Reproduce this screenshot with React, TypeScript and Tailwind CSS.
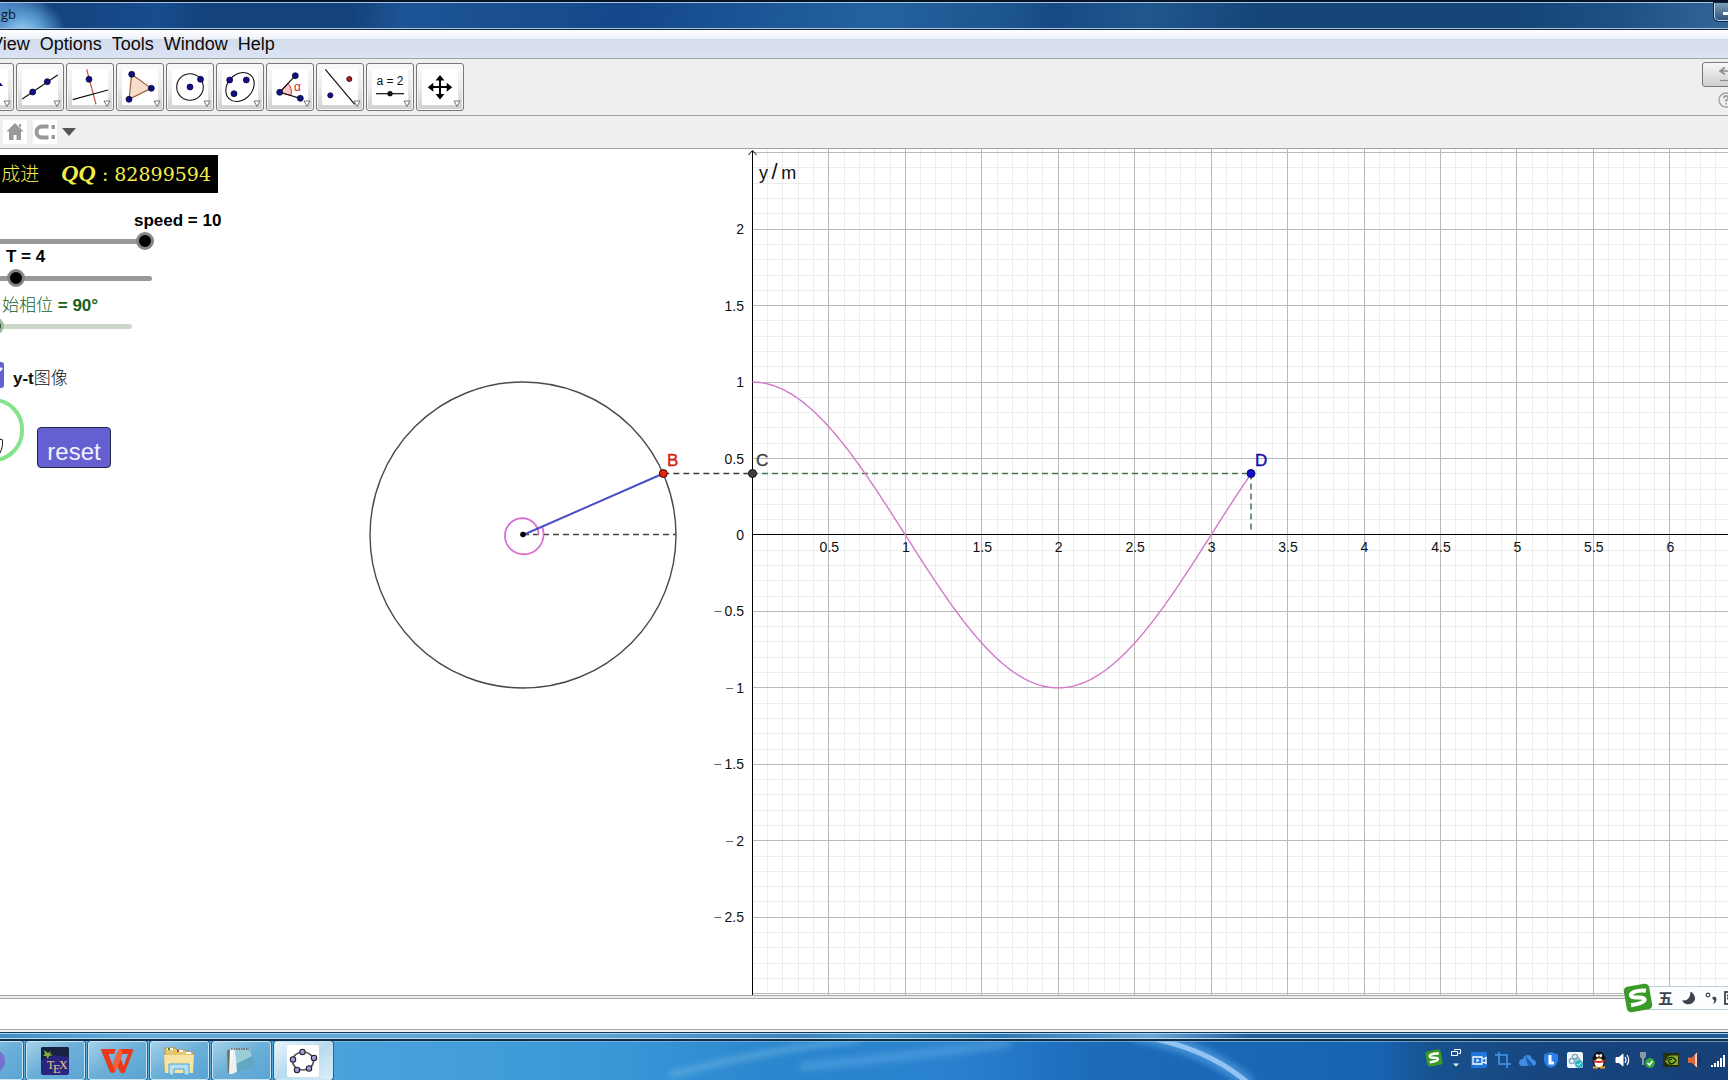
import React from "react";

const NAVY = "#101080";

/* ---------- toolbar ---------- */

function Dot({ x, y, c = NAVY, r = 3 }: { x: number; y: number; c?: string; r?: number }) {
  return <circle cx={x} cy={y} r={r} fill={c} stroke="#000033" strokeWidth="0.7" />;
}

function Tool({ label, children }: { label: string; children: React.ReactNode }) {
  return (
    <button
      aria-label={label}
      className="h-12 w-12 shrink-0 rounded-[3px] border border-[#777] bg-gradient-to-b from-[#fafafa] via-[#ececec] to-[#cfcfcf] shadow-[inset_0_0_0_1px_#f8f8f8]"
    >
      <svg viewBox="1 1 46 46" className="block h-full w-full" fill="none">
        <rect x="6" y="6" width="36" height="36" fill="#fff" />
        {children}
        <path d="M38 38h6l-3 5.5z" fill="#fff" stroke="#666" strokeWidth="0.9" />
      </svg>
    </button>
  );
}

function Toolbar() {
  return (
    <div className="flex justify-between overflow-hidden border-b border-[#a3a3a3] bg-[#efefef]">
      <div className="-ml-[34px] flex gap-0.5 pt-1 pb-1">
        <Tool label="Move">
          <path d="M28 12l9 11h-6z" fill={NAVY} />
        </Tool>
        <Tool label="Line">
          <path d="M6.3 36L41.7 12" stroke="#111" strokeWidth="1.2" />
          <Dot x={16.7} y={29} />
          <Dot x={31.3} y={18.7} />
        </Tool>
        <Tool label="Perpendicular line">
          <path d="M20.7 6.3L30 41.3" stroke="#c44a3c" strokeWidth="1.2" />
          <path d="M6.7 36.7L42 27" stroke="#111" strokeWidth="1.2" />
          <Dot x={23} y={16.3} />
        </Tool>
        <Tool label="Polygon">
          <path d="M15.7 11.3L35.3 25.3 13 36.3z" fill="#f5dccb" stroke="#9a5a30" strokeWidth="1.1" />
          <Dot x={15.7} y={11.3} />
          <Dot x={35.3} y={25.3} />
          <Dot x={13} y={36.3} />
        </Tool>
        <Tool label="Circle">
          <circle cx="24" cy="24" r="13.3" stroke="#111" strokeWidth="1.1" />
          <Dot x={24} y={24} />
          <Dot x={34.5} y={16.3} />
        </Tool>
        <Tool label="Ellipse">
          <ellipse cx="24" cy="24" rx="16" ry="12.5" transform="rotate(-48 24 24)" stroke="#111" strokeWidth="1.1" />
          <Dot x={13.7} y={17} />
          <Dot x={30.3} y={17} />
          <Dot x={18} y={30.7} />
        </Tool>
        <Tool label="Angle">
          <path d="M13.7 29.3L22 20.4Q26.5 25 25 32.5z" fill="#f8c9c4" stroke="#c33" strokeWidth="1" />
          <path d="M29.3 12.7L13.7 29.3 34.3 35.3" stroke="#111" strokeWidth="1.2" />
          <text x="28" y="28" fontSize="12" fill="#d22" className="font-['Liberation_Sans',sans-serif]">α</text>
          <Dot x={29.3} y={12.7} />
          <Dot x={13.7} y={29.3} />
          <Dot x={34.3} y={35.3} />
        </Tool>
        <Tool label="Reflect about line">
          <path d="M9.3 6.3L38.7 41.3" stroke="#111" strokeWidth="1.2" />
          <Dot x={14.3} y={32.3} r={2.6} />
          <Dot x={33.3} y={16} r={2.6} c="#b02020" />
        </Tool>
        <Tool label="Slider">
          <text x="24" y="22" fontSize="12" fill="#111" textAnchor="middle" className="font-['Liberation_Sans',sans-serif]">a = 2</text>
          <path d="M10 30.7h28" stroke="#111" strokeWidth="1.2" />
          <circle cx="24" cy="30.7" r="2.6" fill="#111" />
        </Tool>
        <Tool label="Move graphics view">
          <path d="M24 14v20M14 24h20" stroke="#000" strokeWidth="2" />
          <path d="M24 12l4.5 5.5h-9zM24 36.5l4.5-5.5h-9zM11.8 24.2l5.5-4.5v9zM36.2 24.2l-5.5-4.5v9z" fill="#000" />
        </Tool>
      </div>
      <div className="-mr-[22px] flex flex-col items-center gap-1 pt-[3px]">
        <button
          aria-label="Undo"
          className="h-[25px] w-12 rounded-[3px] border border-[#777] bg-gradient-to-b from-[#f8f8f8] to-[#cfcfcf]"
        >
          <svg viewBox="0 0 46 23" className="h-full w-full" fill="none" stroke="#8f8f8f" strokeWidth="1.6">
            <path d="M17 8h16M22 4.5L17 8l5 3.5" />
            <path d="M17 17.5h16" strokeWidth="1.2" />
          </svg>
        </button>
        <button aria-label="Help" className="h-[18px] w-[18px]">
          <svg viewBox="0 0 18 18" className="h-full w-full" fill="none" stroke="#a0a0a0">
            <circle cx="9" cy="9" r="7" strokeWidth="1.4" />
            <path d="M6.8 7.2q.2-2.2 2.3-2.2 2.2 0 2.2 2 0 1.4-2.2 2.4v1.3M9.1 12v1.6" strokeWidth="1.8" />
          </svg>
        </button>
      </div>
    </div>
  );
}

function StyleBar() {
  return (
    <div className="flex h-[33px] items-center gap-[5px] border-b border-[#a3a3a3] bg-[#efefef] pl-[3px]">
      <button aria-label="Standard view" className="h-6 w-6 bg-white">
        <svg viewBox="0 0 24 24" fill="#999" className="h-full w-full">
          <path d="M12 3l8.5 8.5h-2.500V20h-4.500v-5h-3v5H6v-8.500H3.500zM16 4h2v4l-2-2z" />
        </svg>
      </button>
      <button aria-label="Point capturing" className="ml-px h-6 w-6 bg-white">
        <svg viewBox="0 0 24 24" fill="none" className="h-full w-full">
          <path d="M15.500 6.500H9a5.500 5.500 0 000 11h6.500" stroke="#999" strokeWidth="4" />
          <path d="M18.500 5h3.500v4h-3.500zM18.500 15h3.500v4h-3.500z" fill="#999" />
        </svg>
      </button>
      <button aria-label="More" className="h-6 w-[14px]">
        <svg viewBox="0 0 14 24" className="h-full w-full">
          <path d="M0 8h14L7 16z" fill="#555" />
        </svg>
      </button>
    </div>
  );
}

/* ---------- graphics view ---------- */

const UNIT = 152.9;
const X0 = 752.4;
const Y0 = 385.95;
const CX = 523;
const CY = 386;
const px = (v: number) => X0 + UNIT * v;
const py = (v: number) => Y0 - UNIT * v;
const snap = (v: number) => Math.floor(v) + 0.5;

const T_NOW = 3.261;
const Y_NOW = Math.cos((Math.PI / 2) * T_NOW);
const PHASE = (Math.PI / 2) * (1 + T_NOW);

const curve = Array.from({ length: 201 }, (_, i) => {
  const t = (T_NOW * i) / 200;
  return `${px(t).toFixed(2)},${py(Math.cos((Math.PI / 2) * t)).toFixed(2)}`;
}).join(" ");

const spiral = Array.from({ length: 121 }, (_, i) => {
  const a = (PHASE * i) / 120;
  const r = 15.5 + (5 * a) / (2 * Math.PI);
  return `${(CX + r * Math.cos(a)).toFixed(2)},${(CY - r * Math.sin(a)).toFixed(2)}`;
}).join(" ");

function Plot() {
  const cols = Array.from({ length: 130 }, (_, i) => i + 1);
  const rows = Array.from({ length: 57 }, (_, i) => i - 31);
  const xTicks = Array.from({ length: 12 }, (_, i) => (i + 1) / 2);
  const yTicks = [2, 1.5, 1, 0.5, 0, -0.5, -1, -1.5, -2, -2.5];
  const bx = CX + 153 * Math.cos(PHASE);
  const by = snap(py(Y_NOW) - 0.5);
  const dx = px(T_NOW);
  return (
    <svg className="absolute inset-0 h-full w-full font-['Liberation_Sans',sans-serif]" fill="none">
      {cols.filter((i) => i % 5).map((i) => (
        <path key={i} d={`M${snap(px(i / 10))} 0V844`} stroke="#ececec" />
      ))}
      {rows.filter((i) => i % 5 && i > -30).map((i) => (
        <path key={i} d={`M${X0} ${snap(py(i / 10))}H9999`} stroke="#ececec" />
      ))}
      {cols.filter((i) => i % 5 === 0).map((i) => (
        <path key={i} d={`M${snap(px(i / 10))} 0V846`} stroke="#b9b9b9" />
      ))}
      {rows.filter((i) => i % 5 === 0).map((i) => (
        <path key={i} d={`M${X0} ${snap(py(i / 10))}H9999`} stroke="#b9b9b9" />
      ))}
      <path d={`M752.5 2V9999M${X0} ${snap(Y0)}H9999`} stroke="#000" />
      <path d="M748.5 6l4-4.5 4 4.5" stroke="#000" />

      <g fontSize="14" fill="#111">
        {xTicks.map((v) => (
          <text key={v} x={px(v) + 0.5} y="403" textAnchor="middle">{v}</text>
        ))}
        {yTicks.map((v) => (
          <text key={v} x="744" y={Math.round(py(v)) + 5} textAnchor="end">
            {v < 0 ? <><tspan fill="#666">−</tspan>{`\u2009${-v}`}</> : v}
          </text>
        ))}
      </g>
      <text x="759" y="30" fontSize="18" fill="#111">
        {"y\u2009"}<tspan fontSize="22">/</tspan>{"\u2009m"}
      </text>

      <circle cx={CX} cy={CY} r="153" stroke="#4a4a4a" strokeWidth="1.4" />
      <path d={`M${CX} ${snap(CY - 1)}H${CX + 153}`} stroke="#444" strokeWidth="1.3" strokeDasharray="6 4" />
      <polyline points={spiral} stroke="#d86fd0" strokeWidth="1.8" />
      <path d={`M${CX} ${CY}L${bx} ${by}`} stroke="#4a4fc8" strokeWidth="2" />
      <path d={`M${bx} ${by}H752`} stroke="#3c3c3c" strokeWidth="1.5" strokeDasharray="6 4" />
      <path d={`M752 ${by}H${dx}`} stroke="#47744f" strokeWidth="1.5" strokeDasharray="6 4" />
      <path d={`M${dx} ${by}V383`} stroke="#47744f" strokeWidth="1.5" strokeDasharray="6 4" />
      <polyline points={curve} stroke="#d279cc" strokeWidth="1.4" />

      <circle cx={CX} cy={CY - 0.5} r="2.8" fill="#000" />
      <circle cx={bx} cy={by} r="4" fill="#e8200c" stroke="#3a0a05" />
      <circle cx="752.5" cy={by} r="4" fill="#404040" stroke="#111" />
      <circle cx={dx} cy={by} r="4" fill="#1010d0" stroke="#0a0a60" />
      <g fontSize="17">
        <text x="667" y="317" fill="#d8200f" stroke="#d8200f" strokeWidth="0.4">B</text>
        <text x="756" y="317" fill="#444" stroke="#444" strokeWidth="0.4">C</text>
        <text x="1255" y="317" fill="#1212a8" stroke="#1212a8" strokeWidth="0.4">D</text>
      </g>
    </svg>
  );
}

const CJK = "font-['Noto_Sans_CJK_SC',sans-serif] font-light";

function Controls() {
  return (
    <div className="relative flex flex-col items-start font-['Liberation_Sans',sans-serif] text-[17px] leading-5">
      <div className="mt-1.5 flex h-[38px] w-[218px] items-center justify-end gap-[22px] overflow-hidden bg-black pr-[7px] whitespace-nowrap text-[#f3ee4c]">
        <span className={`${CJK} pb-0.5 text-[19px]`}>成进</span>
        <p className="flex items-baseline gap-1.5 pb-0.5 font-['DejaVu_Serif',serif] text-[19px]">
          <i className="font-['Liberation_Serif',serif] text-2xl leading-5 font-bold">QQ</i>
          <span>:</span>
          <span>82899594</span>
        </p>
      </div>

      <label htmlFor="speed" className="mt-[18px] pl-[134px] font-bold">speed = 10</label>
      <input
        id="speed"
        type="range"
        min="0"
        max="10"
        defaultValue="10"
        className="mt-px -ml-[66px] block h-[18px] w-[220px] appearance-none rounded-full bg-[linear-gradient(#999,#999)] bg-[length:212px_5px] bg-[position:left_center] bg-no-repeat [&::-webkit-slider-thumb]:h-[18px] [&::-webkit-slider-thumb]:w-[18px] [&::-webkit-slider-thumb]:appearance-none [&::-webkit-slider-thumb]:rounded-full [&::-webkit-slider-thumb]:border-[3px] [&::-webkit-slider-thumb]:border-[#858585] [&::-webkit-slider-thumb]:bg-black"
      />
      <label htmlFor="period" className="-mt-[3px] pl-[6px] font-bold">T = 4</label>
      <input
        id="period"
        type="range"
        min="0"
        max="10"
        defaultValue="4"
        className="mt-0.5 -ml-[78px] block h-[18px] w-[230px] appearance-none bg-transparent [&::-webkit-slider-runnable-track]:h-[5px] [&::-webkit-slider-runnable-track]:rounded-full [&::-webkit-slider-runnable-track]:bg-[#999] [&::-webkit-slider-thumb]:-mt-[7px] [&::-webkit-slider-thumb]:h-[18px] [&::-webkit-slider-thumb]:w-[18px] [&::-webkit-slider-thumb]:appearance-none [&::-webkit-slider-thumb]:rounded-full [&::-webkit-slider-thumb]:border-[3px] [&::-webkit-slider-thumb]:border-[#858585] [&::-webkit-slider-thumb]:bg-black"
      />
      <label htmlFor="phase" className="mt-[7px] pl-0.5 text-[#14601c]">
        <span className={CJK}>始相位</span> <b>= 90°</b>
      </label>
      <input
        id="phase"
        type="range"
        min="0"
        max="360"
        defaultValue="90"
        className="mt-px -ml-[57px] block h-[18px] w-[189px] appearance-none bg-transparent [&::-webkit-slider-runnable-track]:h-[5px] [&::-webkit-slider-runnable-track]:rounded-full [&::-webkit-slider-runnable-track]:bg-[#c9d8c9] [&::-webkit-slider-thumb]:-mt-[7px] [&::-webkit-slider-thumb]:h-[18px] [&::-webkit-slider-thumb]:w-[18px] [&::-webkit-slider-thumb]:appearance-none [&::-webkit-slider-thumb]:rounded-full [&::-webkit-slider-thumb]:border-[3px] [&::-webkit-slider-thumb]:border-[#a3bda5] [&::-webkit-slider-thumb]:bg-[#1c5026]"
      />

      <div className="mt-[27px] -ml-[22px] flex h-[26px] items-center gap-[9px]">
        <span className="relative block h-[26px] w-[26px]">
          <input
            id="yt"
            type="checkbox"
            defaultChecked
            className="block h-[26px] w-[26px] appearance-none rounded-[3px] bg-[#6560d2]"
          />
          <svg viewBox="0 0 26 26" className="pointer-events-none absolute inset-0" fill="none">
            <path d="M5 13l6 6L24 6" stroke="#fff" strokeWidth="2.5" />
          </svg>
        </span>
        <label htmlFor="yt" className="pt-1.5 text-[#111]">
          <b>y-t</b>
          <span className={CJK}>图像</span>
        </label>
      </div>

      <div className="mt-[10px] flex items-start">
        <button aria-label="Play" className="relative -ml-[38px] h-[64px] w-[62px] rounded-full border-4 border-[#86e38b]">
          <svg viewBox="0 0 12 18" className="absolute top-[34px] left-[26px] h-[18px] w-3" fill="#fff" stroke="#222" strokeWidth="1">
            <path d="M1 3v7q2 6 5 7h2q2-4 2.500-8V4q-1-2-2 0V3Q7 1 6 3 5 1 4 3z" />
          </svg>
        </button>
        <button className="mt-[29px] ml-[13px] h-[41px] w-[74px] rounded-[4px] border border-[#26264a] bg-[#6560d2] pt-2 text-2xl leading-6 text-[#f2f2ff]">
          reset
        </button>
      </div>
    </div>
  );
}

/* ---------- input method bar ---------- */

function SogouMark({ className }: { className: string }) {
  return (
    <svg viewBox="0 0 28 28" className={className}>
      <g transform="rotate(-10 14 14)">
        <rect x="2" y="2" width="24" height="24" rx="4" fill="#3a9a28" />
        <path d="M22.500 8.500q-6-1.700-11-.8-4 1-3.500 3.300.5 1.800 5 2.400 7 .8 6.800 3.200-.5 3.200-13.500 3" fill="none" stroke="#fff" strokeWidth="3.8" />
      </g>
    </svg>
  );
}

function ImeBar() {
  return (
    <div className="absolute right-0 bottom-[-15px] z-10 flex h-6 items-center border-y border-[#bccfd6] bg-[#fbfdfe]">
      <SogouMark className="-ml-[18px] h-[30px] w-[30px]" />
      <div className="flex w-[75px] items-center gap-[9px] overflow-hidden pl-[5px] text-[#3c4350]">
        <span className="font-['Noto_Sans_CJK_SC',sans-serif] text-[15px] leading-5 font-bold">五</span>
        <svg viewBox="0 0 14 14" className="h-[14px] w-[14px] shrink-0" fill="#3c4350">
          <path d="M8.500 0.500q5.500 3.500 4.300 8.500-2.500 5-8 4.200Q1.500 12.500 0 9.500q8.500 1 8.500-9z" />
        </svg>
        <svg viewBox="0 0 12 14" className="h-[14px] w-3 shrink-0" fill="#3c4350">
          <circle cx="3" cy="4" r="1.8" fill="none" stroke="#3c4350" strokeWidth="1.2" />
          <path d="M7.500 6q4-1 4 2-.3 4-3.500 5 1.500-2 1.200-4-2 0-1.700-3z" />
        </svg>
        <svg viewBox="0 0 16 14" className="-ml-0.5 h-[14px] w-4 shrink-0" fill="none" stroke="#3c4350" strokeWidth="1.8">
          <rect x="1" y="1" width="14" height="12" />
          <path d="M3 4.500h10M3 7.500h10M4 10.500h8" strokeDasharray="2 1.5" />
        </svg>
      </div>
    </div>
  );
}

/* ---------- task bar ---------- */

function Task({ label, active, children }: { label: string; active?: boolean; children?: React.ReactNode }) {
  return (
    <button
      aria-label={label}
      className={
        "flex h-[39px] w-[59px] shrink-0 items-center justify-center rounded-[3px] border border-[#c9e4f2] pr-px shadow-[0_0_0_1px_#2c6287] " +
        (active
          ? "bg-gradient-to-br from-[#e8f4fb] via-[#b9dbee] to-[#dcedf7]"
          : "bg-gradient-to-br from-[#a5d0e8] via-[#6aafd8] to-[#5aa4d4]")
      }
    >
      {children}
    </button>
  );
}

const pentagon = [[15.5, 7], [27, 13], [22, 23.5], [10, 25], [6, 14.5]];

function Taskbar() {
  return (
    <div className="relative flex h-[41px] shrink-0 items-stretch justify-between overflow-hidden border-t-2 border-[#0a2c4a] bg-[linear-gradient(90deg,#5fb0de_0px,#4aa2db_340px,#3b98d8_600px,#2a86cd_780px,#2a82cf_950px,#1c6cba_1090px,#1763b2_1380px,#17528f_1430px,#174680_1540px,#173f78_1728px)]">
      <svg viewBox="0 0 1728 39" preserveAspectRatio="none" className="absolute inset-0 h-full w-full" fill="none">
        <defs>
          <filter id="glow" x="-10%" y="-50%" width="120%" height="200%">
            <feGaussianBlur stdDeviation="3" />
          </filter>
        </defs>
        <g filter="url(#glow)">
          <path d="M670 34Q760 10 860 -2" stroke="#7cc0ea" strokeOpacity="0.5" strokeWidth="6" />
          <path d="M800 26Q900 16 1010 2" stroke="#6db4ec" strokeOpacity="0.4" strokeWidth="9" />
          <path d="M1135 -6Q1205 4 1250 44" stroke="#5fa8ea" strokeOpacity="0.6" strokeWidth="14" />
        </g>
        <path d="M1138 -5Q1205 5 1248 42" stroke="#b4dbff" strokeOpacity="0.7" strokeWidth="5" />
        <path d="M0 0.5h1728" stroke="#8fb9d4" strokeOpacity="0.7" />
      </svg>
      <div className="relative -ml-9 flex gap-[3px]">
        <Task label="Application">
          <svg viewBox="0 0 28 28" className="h-7 w-7">
            <path d="M14 2a12 12 0 010 24 12 12 0 010-24z" fill="#7e57c9" fillOpacity="0.7" />
          </svg>
        </Task>
        <Task label="TeX">
          <svg viewBox="0 0 28 28" className="h-7 w-7">
            <rect width="28" height="28" rx="2" fill="#29257e" />
            <path d="M0 2q0-2 2-2h24q2 0 2 2v8L14 8 0 13z" fill="#17203f" />
            <path d="M3 3l4 3 3-2-1 3 3 1-4 1-1 3-2-3-3 0 2-2z" fill="#7fae3a" />
            <g fill="#f0c890" className="font-['Liberation_Serif',serif]">
              <text x="6" y="22" fontSize="12">T</text>
              <text x="12" y="26" fontSize="12">E</text>
              <text x="18" y="22" fontSize="12">X</text>
            </g>
          </svg>
        </Task>
        <Task label="WPS">
          <svg viewBox="0 0 32 26" className="h-[26px] w-8">
            <path d="M0 2Q0 1 1 1h14l-2 5H7.500l4 11L17 3q1-2 3-2h11q1 0 1 2l-8 21q-1 2-3 1-2 0-2.500-2l-2-5-2 5q-1 2-3 2t-3-2z" fill="#e8391d" />
            <path d="M19 9l3.500 9L27 6h-4q-2 0-2.500 1z" fill="#7cb8dd" />
            <path d="M17 3l-5.500 14 2 6q2-1 3-4l5-13q0-3-2-5-2 0-2.500 2z" fill="#f4603a" />
          </svg>
        </Task>
        <Task label="Explorer">
          <svg viewBox="0 0 32 28" className="h-7 w-8">
            <path d="M2 1h10l2 2h8l2 2h6v20H2z" fill="#e6c56e" stroke="#b9963f" />
            <path d="M4 2h6M14 4h6M23 6h5" stroke="#fff" strokeWidth="2" />
            <path d="M5 2h2" stroke="#2f8a35" strokeWidth="2" />
            <path d="M14 4h2" stroke="#c43a2a" strokeWidth="2" />
            <path d="M1 8h30l-1 18H2z" fill="#f6e4a4" />
            <path d="M6 28V17h20v11h-5v-6H11v6z" fill="#b7e0f4" stroke="#4aa3cf" />
          </svg>
        </Task>
        <Task label="Notes">
          <svg viewBox="0 0 32 28" className="h-7 w-8">
            <path d="M2 4l3-2 1 22-3 3z" fill="#776c55" />
            <path d="M5 2l5-1-2 26H4z" fill="#f4f8fa" />
            <path d="M10 1h14l6 18-20 7z" fill="#5fa8c0" />
            <path d="M10 1h14l3 8-16 8z" fill="#9ccbd9" />
            <path d="M10 1l2 24-6 2-2-1z" fill="#e9f1f3" />
            <path d="M6 2h18" stroke="#555" strokeWidth="1.5" strokeDasharray="1.5 1" />
          </svg>
        </Task>
        <Task label="GeoGebra" active>
          <svg viewBox="0 0 32 32" className="h-8 w-8 rounded-[2px] bg-white">
            <ellipse cx="16" cy="16" rx="10.5" ry="9" fill="none" stroke="#555" strokeWidth="1.6" />
            {pentagon.map(([x, y]) => (
              <circle key={x} cx={x} cy={y} r="2.7" fill="#9c9ce0" stroke="#222" strokeWidth="1.1" />
            ))}
          </svg>
        </Task>
      </div>

      <div className="relative flex items-center gap-[6px] pb-0.5">
        <SogouMark className="-mt-1 h-[18px] w-[18px]" />
        <svg viewBox="0 0 10 20" className="-mt-1 mr-[3px] ml-0.5 h-5 w-[10px]" fill="none" stroke="#fff">
          <path d="M3.500 2.500v-1h6v4h-2M.5 3.500h6v4h-6z" />
          <path d="M2 15.500h6L5 18.500z" fill="#fff" stroke="none" />
        </svg>
        <svg viewBox="0 0 18 18" className="h-[18px] w-[18px]">
          <rect x="1" y="1" width="16" height="16" rx="2" fill="#2176dc" />
          <path d="M3 6h9v7H3zM13 8l3-1.500v6L13 11" fill="none" stroke="#fff" strokeWidth="1.3" />
          <path d="M6.500 7.500v4l3-2z" fill="#fff" />
        </svg>
        <svg viewBox="0 0 18 18" className="h-[18px] w-[18px]" fill="none" stroke="#3a86dc" strokeWidth="2">
          <path d="M5 1v12h12M1 4h12v13" />
        </svg>
        <svg viewBox="0 0 18 18" className="h-[18px] w-[18px]">
          <path d="M1 12q0-4 4-4 1-4 5-4 3 0 4 4 4 1 4 4 0 3-4 3H5q-4 0-4-3z" fill="#3f8ee2" />
          <path d="M7 4l9 11h-6z" fill="#1b5fb5" />
        </svg>
        <svg viewBox="0 0 18 18" className="h-[18px] w-[18px]">
          <path d="M9 1l7 2.500v5Q16 14.500 9 17 2 14.500 2 8.500v-5z" fill="#2a80e8" />
          <path d="M8 4v8h4" fill="none" stroke="#fff" strokeWidth="3" />
        </svg>
        <svg viewBox="0 0 18 18" className="h-[18px] w-[18px]">
          <rect x="1" y="1" width="16" height="16" rx="2" fill="#eef7fa" />
          <g fill="none" stroke="#7fa8ba" strokeWidth="1.4">
            <circle cx="9" cy="6" r="2.6" />
            <circle cx="6" cy="10" r="2.6" />
            <circle cx="11" cy="9.5" r="2.6" />
          </g>
          <circle cx="13" cy="13" r="4" fill="#2bb5c6" />
          <path d="M11 13l1.500 1.500 2.500-3" fill="none" stroke="#fff" />
        </svg>
        <svg viewBox="0 0 18 18" className="h-[18px] w-[18px]">
          <ellipse cx="9" cy="9" rx="6.5" ry="8.5" fill="#111" />
          <ellipse cx="9" cy="12" rx="4.5" ry="4.5" fill="#fff" />
          <circle cx="7.3" cy="4.5" r="1.5" fill="#fff" />
          <circle cx="10.7" cy="4.5" r="1.5" fill="#fff" />
          <path d="M6 6.700h6l-3 1.800z" fill="#f3a51c" />
          <path d="M3.500 8.500q5.500 3 11 0l.5 2q-6 3-12 0z" fill="#df2c22" />
          <path d="M3 16.500h5M10 16.500h5" stroke="#f3a51c" strokeWidth="2" />
        </svg>
        <svg viewBox="0 0 18 18" className="h-[18px] w-[18px]" fill="none" stroke="#fff">
          <path d="M2 6.500h3L9 3v12l-4-3.500H2z" fill="#fff" />
          <path d="M11 6q2 3 0 6M13 4q3.500 5 0 10" strokeWidth="1.2" />
        </svg>
        <svg viewBox="0 0 18 18" className="h-[18px] w-[18px]">
          <path d="M2 1h6v5l-2 2v6H4V8L2 6z" fill="#8d99a2" />
          <circle cx="12" cy="12" r="5" fill="#35a839" />
          <path d="M9.500 12l2 2 3-4" fill="none" stroke="#fff" strokeWidth="1.5" />
        </svg>
        <svg viewBox="0 0 18 18" className="h-[18px] w-[18px]">
          <rect x="1" y="2" width="16" height="14" rx="1" fill="#26300f" />
          <path d="M3 9.500q2-4.500 6-5h7v9.500H9q-4-.5-6-4.500z" fill="#7db023" />
          <path d="M3.500 9.500q3-4 7-3 2.500 1 3.500 3-1.500 3-4.500 3.500-2.500-.5-3-3 1-2 3.500-1.500" fill="none" stroke="#1d280b" strokeWidth="1.3" />
        </svg>
        <svg viewBox="0 0 18 18" className="h-[18px] w-[18px]" fill="none">
          <path d="M2 6.500h4L11 1.500v15L6 12H2z" fill="#d8693c" />
          <path d="M9 3.500v11l2 2v-15z" fill="#f5c9b0" />
          <path d="M13 6q2 3 0 6" stroke="#123056" strokeWidth="1.3" />
        </svg>
        <svg viewBox="0 0 18 18" className="h-[18px] w-[18px]" fill="#fff">
          <path d="M1 14h2v2H1zM4 12h2v4H4zM7 10h2v6H7zM10 7h2v9h-2zM13 4h2v12h-2z" />
        </svg>
      </div>
    </div>
  );
}

/* ---------- window ---------- */

function TitleBar() {
  return (
    <header className="flex h-[30px] shrink-0 items-start justify-between overflow-hidden border-t-2 border-b border-t-[#061226] border-b-[#0d2340] bg-[radial-gradient(ellipse_44px_34px_at_22px_30px,#9cd0f4_0%,#5d9dd6_45%,transparent_100%),linear-gradient(100deg,#4a86c4_0px,#15437f_50px,#174d8e_160px,#14427c_200px,#14427c_350px,#1d5596_400px,#1a5090_480px,#14488a_620px,#1b5595_740px,#24629e_870px,#1d5690_990px,#174a85_1040px,#1f578e_1130px,#164678_1240px,#164678_1500px,#1d5184_1600px,#3a6a9c_1728px)]">
      <div className="flex h-[27px] w-full items-start justify-between border-t border-b border-[#a9c4de]">
        <h1 className="pt-[3px] pl-px font-['Open_Sans',sans-serif] text-[13px] leading-4 text-[#0b1626]">gb</h1>
        <button
          aria-label="Minimize"
          className="-mr-[18px] h-[18px] w-8 rounded-b-[5px] border border-t-0 border-[#c3d3e2] bg-gradient-to-b from-[#7f9cb8] to-[#2f5680] pb-0.5 pl-2 shadow-[0_0_0_1px_#10253f]"
        >
          <span className="mt-1.5 block h-[3px] w-3 bg-white" />
        </button>
      </div>
    </header>
  );
}

export default function App() {
  return (
    <div className="flex h-screen flex-col overflow-hidden bg-white">
      <TitleBar />
      <nav className="flex h-[29px] shrink-0 items-center gap-[10px] border-b border-[#a3a3a3] bg-[linear-gradient(#ffffff_0%,#eff3fa_30%,#d3dceb_34%,#dbe3f4_100%)] font-['Liberation_Sans',sans-serif] text-lg leading-6 text-[#0a0a0a]">
        <button className="-ml-[9px]">View</button>
        <button>Options</button>
        <button>Tools</button>
        <button>Window</button>
        <button>Help</button>
      </nav>
      <Toolbar />
      <StyleBar />
      <main className="relative min-h-0 flex-1">
        <div className="absolute inset-0 overflow-hidden">
          <Plot />
          <Controls />
        </div>
        <ImeBar />
      </main>
      <div className="h-1 shrink-0 border-y border-[#a6a6a6] bg-[#eee]" />
      <footer className="h-[30px] shrink-0 bg-white" />
      <div className="h-[3px] shrink-0 border-t border-[#a6a6a6] bg-[#eee]" />
      <div className="h-[7px] shrink-0 border-t border-b border-t-[#123a5c] border-b-[#c4e0ee] bg-[linear-gradient(90deg,#3f8ec4_0px,#62acdc_130px,#5aa4d6_600px,#3b84b8_800px,#4a97cb_870px,#2d77b3_1000px,#6aa8da_1150px,#245f9c_1250px,#1d5a97_1728px)] shadow-[inset_0_1px_0_#a8cfe6]" />
      <Taskbar />
    </div>
  );
}
